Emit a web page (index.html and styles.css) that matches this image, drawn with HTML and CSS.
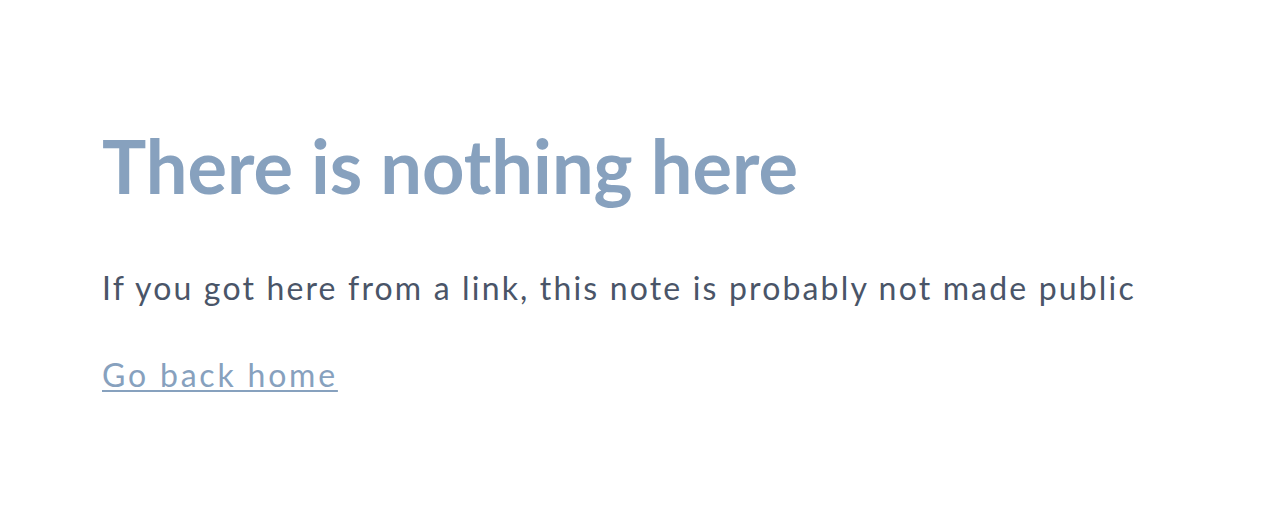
FILE: index.html
```html
<!DOCTYPE html>
<html>
<head>
<meta charset="utf-8">
<link rel="stylesheet" href="styles.css">
</head>
<body>
<main class="page">
  <h1 class="title">There is nothing here</h1>
  <p class="message">If you got here from a link, this note is probably not made public</p>
  <a class="home-link" href="#">Go back home</a>
</main>
</body>
</html>
```

FILE: styles.css
```css
html, body {
  margin: 0;
  padding: 0;
  background: #ffffff;
}
body {
  font-family: "Lato", "Open Sans", sans-serif;
}
.page {
  padding: 129px 102px 0 102px;
  display: flex;
  flex-direction: column;
  align-items: flex-start;
}
.title {
  margin: 0;
  font-size: 74px;
  line-height: 74px;
  font-weight: 700;
  color: #87a1be;
}
.message {
  margin: 63px 0 0 0;
  font-size: 32px;
  line-height: 44px;
  letter-spacing: 2.16px;
  color: #4a5568;
}
.home-link {
  margin-top: 43px;
  font-size: 32px;
  line-height: 44px;
  letter-spacing: 2.8px;
  color: #87a1be;
  text-decoration: underline;
  text-decoration-thickness: 2px;
  text-underline-offset: 3px;
}
```
